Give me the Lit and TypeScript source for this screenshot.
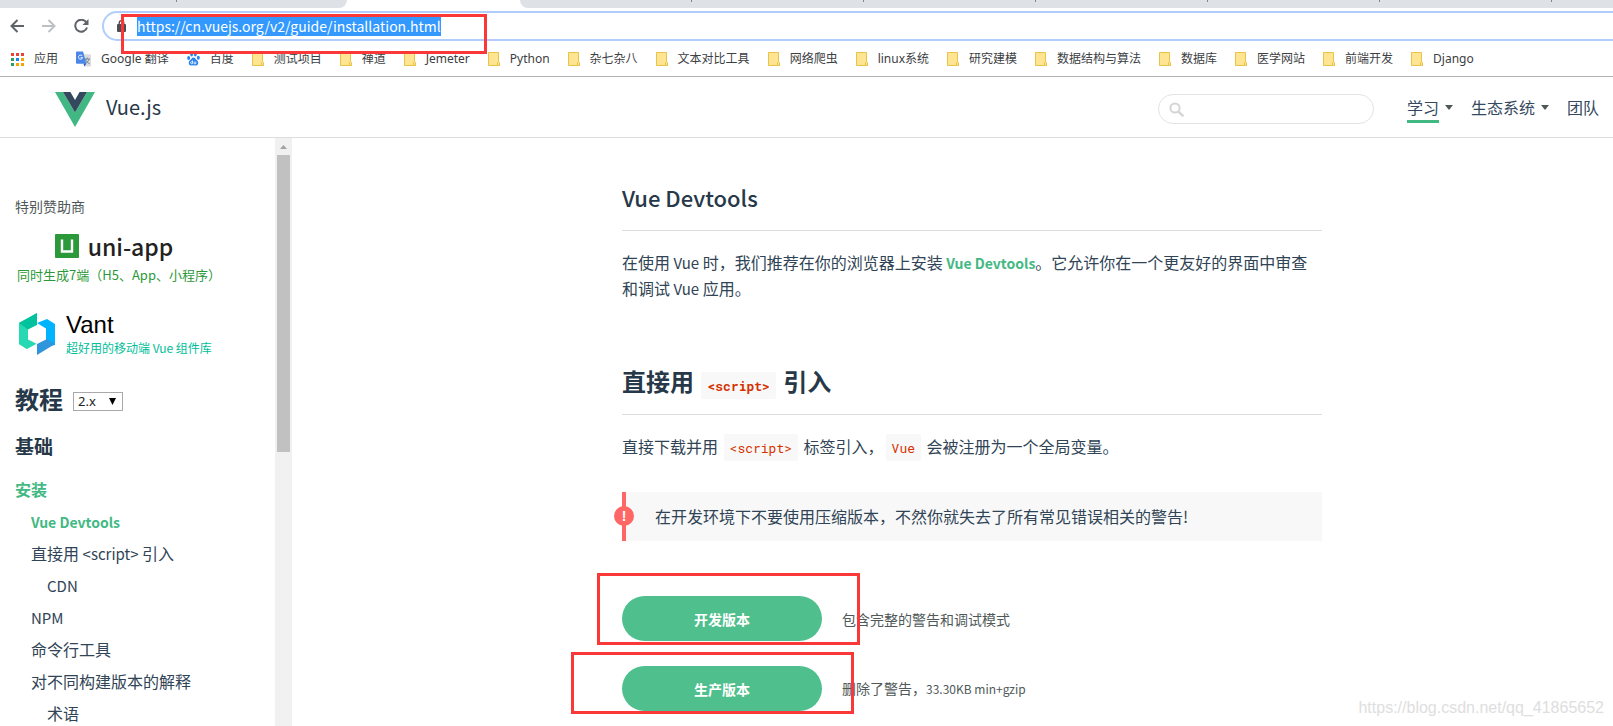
import { LitElement, html, css, svg, nothing } from "lit";
import { customElement, property } from "lit/decorators.js";

const SANS = css`"Noto Sans CJK SC", sans-serif`;

interface Bookmark {
  label: string;
  icon?: "apps" | "translate" | "paw";
}

const BOOKMARKS: Bookmark[] = [
  { label: "应用", icon: "apps" },
  { label: "Google 翻译", icon: "translate" },
  { label: "百度", icon: "paw" },
  { label: "测试项目" },
  { label: "禅道" },
  { label: "Jemeter" },
  { label: "Python" },
  { label: "杂七杂八" },
  { label: "文本对比工具" },
  { label: "网络爬虫" },
  { label: "linux系统" },
  { label: "研究建模" },
  { label: "数据结构与算法" },
  { label: "数据库" },
  { label: "医学网站" },
  { label: "前端开发" },
  { label: "Django" },
];

const APP_COLORS = [
  "#ea4335", "#ea4335", "#ea4335",
  "#2d9f58", "#1a82f0", "#f5a300",
  "#2d9f58", "#f5a300", "#f5a300",
];

const ICONS = {
  apps: svg`<svg width="13" height="13" viewBox="0 0 13 13">${APP_COLORS.map(
    (c, i) => svg`<rect x=${(i % 3) * 5} y=${Math.floor(i / 3) * 5} width="3" height="3" fill=${c} />`
  )}</svg>`,
  translate: svg`<svg width="15" height="16" viewBox="0 0 16 16">
    <path d="M6 3h9a1 1 0 0 1 1 1v11a1 1 0 0 1-1 1H9z" fill="#dcdcdc"/>
    <path d="M9 8h6M12 6.500v1.500M10 8c.8 2.400 2.500 4 4.500 5M14 8c-.7 2.400-2.300 4-4.500 5" stroke="#6d7f8c" fill="none"/>
    <path d="M1 0h6.500l3.500 13H1a1 1 0 0 1-1-1V1a1 1 0 0 1 1-1z" fill="#4a86e8"/>
    <path d="M8 13h3l-2 3z" fill="#2a56c6"/>
    <path d="M6.700 4.800A2.200 2.200 0 1 0 7 6.500H5" stroke="#fff" fill="none"/>
  </svg>`,
  paw: svg`<svg width="13" height="14" viewBox="0 0 13 14" fill="#2a84f0">
    <ellipse cx="1.700" cy="6" rx="1.500" ry="2"/><ellipse cx="4.600" cy="2.400" rx="1.400" ry="2.100"/>
    <ellipse cx="8.300" cy="2.400" rx="1.400" ry="2.100"/><ellipse cx="11.300" cy="5.700" rx="1.500" ry="2"/>
    <path d="M6.500 5.500c1.800 0 2.300 2 3.700 3.100 1.700 1.400 1.300 5-1.200 5-1 0-1.500-.3-2.500-.3s-1.500.3-2.500.3c-2.500 0-2.900-3.600-1.200-5C4.200 7.500 4.700 5.500 6.500 5.500z"/>
    <path d="M5.500 8.500v3.200H4.600a1 1 0 0 1 0-2h.9M7.200 9.500v2.200h1.600V9.500" stroke="#fff" stroke-width=".8" fill="none"/>
  </svg>`,
  folder: svg`<svg width="12" height="14" viewBox="0 0 12 14">
    <path d="M.5.500h10v9l1 1v3H.500z" fill="#ffe491" stroke="#e8c34a"/>
    <path d="M9.500 13.500V10.500l1-1 1 1v3z" fill="#ffe491" stroke="#e8c34a"/>
  </svg>`,
};

@customElement("browser-chrome")
export class BrowserChrome extends LitElement {
  static styles = css`
    :host { display: block; font-family: "Noto Sans", ${SANS}; background: #fff; border-bottom: 1px solid #b0b3b5; }
    .tabs { display: flex; height: 8px; background: #fff; }
    .tab-group { display: flex; background: #dee1e6; }
    .before { flex: 0 0 347px; border-radius: 0 0 8px 0; }
    .active { flex: 0 0 173px; }
    .after { flex: 1; border-radius: 0 0 0 8px; overflow: hidden; }
    .tab { flex: 0 0 172px; height: 2px; box-sizing: border-box; border-right: 1px solid #80868b; }
    .before .tab { flex-basis: 177px; }
    .toolbar { display: flex; align-items: center; height: 36px; padding-left: 10px; overflow-x: clip; }
    .nav { display: flex; gap: 18px; margin-right: 13px; }
    .icon-button { display: flex; border: 0; padding: 0; background: none; }
    .omnibox { position: relative; flex: 1; display: flex; align-items: center; height: 30px; box-sizing: border-box; margin-right: -20px; padding-left: 13px; gap: 11px; border: 2px solid #b0cdfc; border-radius: 15px 0 0 15px; }
    .url { field-sizing: content; border: 0; padding: 0; outline: 0; height: 19px; font: 14px/19px ${SANS}; color: #fff; background: #3399ff; }
    .mark { position: absolute; left: 17px; top: 1px; width: 360px; height: 34px; border: 3px solid #fb3838; z-index: 2; }
    .bookmarks { display: flex; align-items: center; height: 30px; padding: 0 0 2px 11px; gap: 18px; }
    .bookmark { display: flex; align-items: center; gap: 10px; font-size: 12px; line-height: 18px; color: #3c4043; text-decoration: none; white-space: nowrap; }
  `;

  render() {
    return html`
      <div class="tabs">
        <div class="tab-group before"><div class="tab"></div></div>
        <div class="active"></div>
        <div class="tab-group after">${[1, 2, 3, 4, 5, 6].map(() => html`<div class="tab"></div>`)}</div>
      </div>
      <div class="toolbar">
        <div class="nav">
          <button class="icon-button" aria-label="后退"><svg width="14" height="14" viewBox="0 0 14 14" fill="none" stroke="#5f6368" stroke-width="2"><path d="M14 7H1.500M7.500 1L1.500 7l6 6"/></svg></button>
          <button class="icon-button" aria-label="前进"><svg width="14" height="14" viewBox="0 0 14 14" fill="none" stroke="#bdc1c6" stroke-width="2"><path d="M0 7h12.500M6.500 1l6 6-6 6"/></svg></button>
          <button class="icon-button" aria-label="重新加载"><svg width="15" height="14" viewBox="0 0 15 14" fill="none" stroke="#5f6368" stroke-width="2"><path d="M12.200 3.300A6 6 0 1 0 13 8.500"/><path d="M14.500 0v6H8.500z" fill="#5f6368" stroke="none"/></svg></button>
        </div>
        <div class="omnibox">
          <svg width="9" height="12" viewBox="0 0 9 12"><path d="M2.200 5V3a2.300 2.300 0 0 1 4.600 0v2" fill="none" stroke="#4a4d51" stroke-width="1.300"/><rect y="4" width="9" height="8" rx="1" fill="#4a4d51"/></svg>
          <input class="url" aria-label="地址" value="https://cn.vuejs.org/v2/guide/installation.html" />
          <div class="mark"></div>
        </div>
      </div>
      <nav class="bookmarks">
        ${BOOKMARKS.map((b) => html`<a class="bookmark" href="#">${ICONS[b.icon ?? "folder"]}<span>${b.label}</span></a>`)}
      </nav>
    `;
  }
}

@customElement("site-header")
export class SiteHeader extends LitElement {
  static styles = css`
    :host { display: flex; align-items: center; justify-content: space-between; height: 60px; padding: 0 14px 0 55px; border-bottom: 1px solid #ddd; font-family: ${SANS}; color: #34495e; }
    .brand { display: flex; align-items: center; gap: 11px; font-size: 20px; line-height: 30px; color: #273849; text-decoration: none; }
    .logo { margin-top: 4px; }
    .right { display: flex; align-items: center; }
    .search { display: flex; align-items: center; gap: 6px; width: 216px; height: 30px; box-sizing: border-box; margin: 4px 33px 0 0; padding: 0 10px; border: 1px solid #e3e3e3; border-radius: 15px; }
    .query { flex: 1; min-width: 0; border: 0; outline: 0; background: none; font: 14px ${SANS}; }
    .menu { display: flex; gap: 18px; }
    .item { display: flex; align-items: center; gap: 6px; font-size: 16px; color: #34495e; text-decoration: none; }
    .label { line-height: 24px; padding: 4px 0 1px; border-bottom: 3px solid transparent; }
    .current { border-bottom-color: #42b983; }
    .caret { border: 4px solid transparent; border-top: 5px solid #4f5959; border-bottom: 0; }
  `;

  private item(label: string, caret: boolean, current = false) {
    return html`<a class="item" href="#"><span class="label ${current ? "current" : ""}">${label}</span>${caret ? html`<span class="caret"></span>` : nothing}</a>`;
  }

  render() {
    return html`
      <a class="brand" href="#">
        <svg class="logo" width="40" height="35" viewBox="0 0 40 35"><path d="M0 0h8l12 20.500L32 0h8L20 35z" fill="#41b883"/><path d="M8 0h7.400L20 8l4.600-8H32L20 20.500z" fill="#35495e"/></svg>
        <span>Vue.js</span>
      </a>
      <div class="right">
        <label class="search">
          <svg width="15" height="15" viewBox="0 0 15 15" fill="none" stroke="#d5d5d5" stroke-width="2"><circle cx="6" cy="6" r="4.600"/><path d="M9.300 9.300l5 5" stroke-width="2.500"/></svg>
          <input class="query" type="text" aria-label="搜索" />
        </label>
        <nav class="menu">${this.item("学习", true, true)}${this.item("生态系统", true)}${this.item("团队", false)}</nav>
      </div>
    `;
  }
}

interface Entry {
  label: string;
  level: number;
  current?: boolean;
}

const ENTRIES: Entry[] = [
  { label: "安装", level: 0, current: true },
  { label: "Vue Devtools", level: 1, current: true },
  { label: "直接用 <script> 引入", level: 1 },
  { label: "CDN", level: 2 },
  { label: "NPM", level: 1 },
  { label: "命令行工具", level: 1 },
  { label: "对不同构建版本的解释", level: 1 },
  { label: "术语", level: 2 },
];

/** Sets runs of Latin text one size smaller than the Chinese text around them. */
const mixed = (text: string) =>
  text.split(/([\x21-\x7e][\x20-\x7e]*[\x21-\x7e])/).map((part, i) => (i % 2 ? html`<span class="latin">${part}</span>` : part));

@customElement("guide-sidebar")
export class GuideSidebar extends LitElement {
  static styles = css`
    :host { display: flex; flex: 0 0 292px; min-height: 0; overflow: hidden; font-family: ${SANS}; color: #304455; }
    .content { flex: 1; padding: 58px 0 0 15px; }
    .caption { font-size: 14px; line-height: 20px; color: #4f5959; }
    .uni { display: flex; flex-direction: column; align-items: center; width: 198px; margin-top: 18px; color: #2b9939; text-decoration: none; }
    .uni-name { display: flex; align-items: center; gap: 9px; font-size: 23px; line-height: 24px; color: #222; font-weight: 500; }
    .slogan { font-size: 12px; line-height: 18px; white-space: nowrap; }
    .uni .slogan { font-size: 13px; margin-top: 8px; padding-left: 10px; }
    .vant { display: flex; align-items: center; gap: 11px; margin: 27px 0 0 4px; color: #00be9a; text-decoration: none; }
    .vant-name { display: block; font: 24px/28px "Liberation Sans", sans-serif; color: #000; }
    .vant .slogan { display: block; }
    .title { display: flex; align-items: center; gap: 10px; margin: 24px 0 0; font-size: 24px; line-height: 36px; color: #273849; }
    .version { appearance: none; height: 19px; width: 50px; margin-top: 4px; padding: 0 0 0 4px; border: 1px solid #a9a9a9; border-radius: 0; font: 13px/17px "Noto Sans", sans-serif; color: #222; background: #fff url('data:image/svg+xml,<svg xmlns="http://www.w3.org/2000/svg" width="7" height="7"><path d="M0 0h7L3.500 7z"/></svg>') no-repeat right 6px center; }
    .section { margin: 15px 0 0; font-size: 19px; line-height: 28px; color: #273849; }
    .entries { list-style: none; margin: 13px 0 0; padding: 0; font-size: 16px; line-height: 32px; white-space: nowrap; }
    .level-1 { padding-left: 16px; }
    .level-2 { padding-left: 32px; }
    .link { color: inherit; text-decoration: none; }
    .current { color: #42b983; font-weight: 600; }
    .latin { font-size: 15px; line-height: 16px; }
    .current .latin { font-size: 14px; }
    .scrollbar { display: flex; flex-direction: column; align-items: center; width: 17px; background: #f1f1f1; }
    .up { display: flex; align-items: center; justify-content: center; height: 17px; width: 17px; border: 0; padding: 0; background: none; }
    .thumb { width: 13px; height: 297px; background: #c1c1c1; }
  `;

  render() {
    return html`
      <div class="content">
        <div class="caption">特别赞助商</div>
        <a class="uni" href="#">
          <span class="uni-name">
            <svg width="24" height="24" viewBox="0 0 24 24"><rect width="24" height="24" rx="1" fill="#2b9939"/><path d="M7 5.500v12h10v-12" fill="none" stroke="#fff" stroke-width="2.400"/></svg>
            uni-app
          </span>
          <span class="slogan">同时生成7端（H5、App、小程序）</span>
        </a>
        <a class="vant" href="#">
          <svg width="36" height="42" viewBox="0 0 36 42">
            <path d="M0 10L18 0v13L9 18v12l-1 6L0 31z" fill="#26d9b2"/><path d="M0 10L18 0v12L9 16.500z" fill="#00c29c"/>
            <path d="M18 10l10-4 8 5v21l-9 2V15.500z" fill="#00b3ff"/><path d="M18 30l9-4.500L36 31 18 42z" fill="#2f95dc"/>
            <path d="M0 31l8 5 10-5.500L9 25z" fill="#26d9b2"/><path d="M18 12l9 4.500v10L18 31l-9-4.500v-10z" fill="#fff"/>
          </svg>
          <span><span class="vant-name">Vant</span><span class="slogan">超好用的移动端 Vue 组件库</span></span>
        </a>
        <h2 class="title">教程
          <select class="version" aria-label="版本"><option>2.x</option></select>
        </h2>
        <h3 class="section">基础</h3>
        <ul class="entries">
          ${ENTRIES.map((e) => html`<li class="level-${e.level}"><a class="link ${e.current ? "current" : ""}" href="#">${mixed(e.label)}</a></li>`)}
        </ul>
      </div>
      <div class="scrollbar">
        <button class="up" aria-label="向上滚动"><svg width="7" height="4" viewBox="0 0 7 4"><path d="M0 4l3.500-4L7 4z" fill="#a3a3a3"/></svg></button>
        <div class="thumb"></div>
      </div>
    `;
  }
}

@customElement("download-row")
export class DownloadRow extends LitElement {
  @property() label = "";
  @property() note = "";
  static styles = css`
    :host { display: flex; align-items: center; gap: 20px; margin-bottom: 25px; position: relative; }
    .button { width: 200px; height: 45px; border: 0; border-radius: 23px; background: #4fc08d; color: #fff; font: bold 14px/20px ${SANS}; }
    .note { font: 14px/20px ${SANS}; color: #4f5959; }
    .latin { font-size: 12px; }
  `;
  render() {
    return html`<button class="button">${this.label}</button><span class="note">${mixed(this.note)}</span><slot></slot>`;
  }
}

@customElement("guide-article")
export class GuideArticle extends LitElement {
  static styles = css`
    :host { display: block; flex: 1; min-width: 0; padding: 0 0 0 39px; overflow: hidden; font-family: ${SANS}; font-size: 16px; line-height: 25px; color: #304455; }
    .column { max-width: 700px; margin: 0 auto; padding-top: 44px; }
    .heading { margin: 0; color: #273849; border-bottom: 1px solid #ddd; }
    .minor { font-size: 22px; line-height: 30px; padding-bottom: 18px; font-weight: 500; }
    .major { font-size: 24px; line-height: 36px; padding-bottom: 15px; margin-top: 62px; }
    .text { margin: 19px 0 0; }
    .link { color: #42b983; font-weight: 600; font-size: 14px; text-decoration: none; }
    .latin { font-size: 15px; }
    .code { margin: 0 2px; padding: 5px 6px 4px; border-radius: 2px; background: #f8f8f8; color: #d63200; font: 13px/15px "Roboto Mono", "Liberation Mono", monospace; }
    .major .code { font-weight: bold; }
    .tip { position: relative; margin: 33px 0 0; padding: 12px 24px 12px 29px; border-left: 4px solid #f66; background: #f8f8f8; }
    .bang { position: absolute; left: -12px; top: 14px; width: 20px; height: 20px; border-radius: 50%; background: #f66; color: #fff; font: bold 14px/20px "Liberation Sans", sans-serif; text-align: center; }
    .downloads { margin-top: 55px; }
    .mark { position: absolute; box-sizing: border-box; border: 3px solid #fb3838; }
    .mark-dev { left: -25px; top: -23px; width: 263px; height: 72px; }
    .mark-prod { left: -51px; top: -14px; width: 283px; height: 62px; }
  `;

  render() {
    return html`
      <div class="column">
        <h3 class="heading minor">Vue Devtools</h3>
        <p class="text">在使用 <span class="latin">Vue</span> 时，我们推荐在你的浏览器上安装 <a class="link" href="#">Vue Devtools</a>。它允许你在一个更友好的界面中审查和调试 <span class="latin">Vue</span> 应用。</p>
        <h2 class="heading major">直接用 <code class="code">&lt;script&gt;</code> 引入</h2>
        <p class="text">直接下载并用 <code class="code">&lt;script&gt;</code> 标签引入，<code class="code">Vue</code> 会被注册为一个全局变量。</p>
        <p class="tip"><span class="bang">!</span>在开发环境下不要使用压缩版本，不然你就失去了所有常见错误相关的警告!</p>
        <div class="downloads">
          <download-row label="开发版本" note="包含完整的警告和调试模式"><div class="mark mark-dev"></div></download-row>
          <download-row label="生产版本" note="删除了警告，33.30KB min+gzip"><div class="mark mark-prod"></div></download-row>
        </div>
      </div>
    `;
  }
}

@customElement("app-root")
export class AppRoot extends LitElement {
  static styles = css`
    :host { display: flex; flex-direction: column; position: relative; height: 100vh; overflow: hidden; background: #fff; }
    .page { flex: 1; display: flex; min-height: 0; }
    .watermark { position: absolute; right: 9px; bottom: 8px; font: 16px/20px "Liberation Sans", sans-serif; color: #dedede; }
  `;
  render() {
    return html`
      <browser-chrome></browser-chrome>
      <site-header></site-header>
      <div class="page">
        <guide-sidebar></guide-sidebar>
        <guide-article></guide-article>
      </div>
      <div class="watermark">https://blog.csdn.net/qq_41865652</div>
    `;
  }
}
